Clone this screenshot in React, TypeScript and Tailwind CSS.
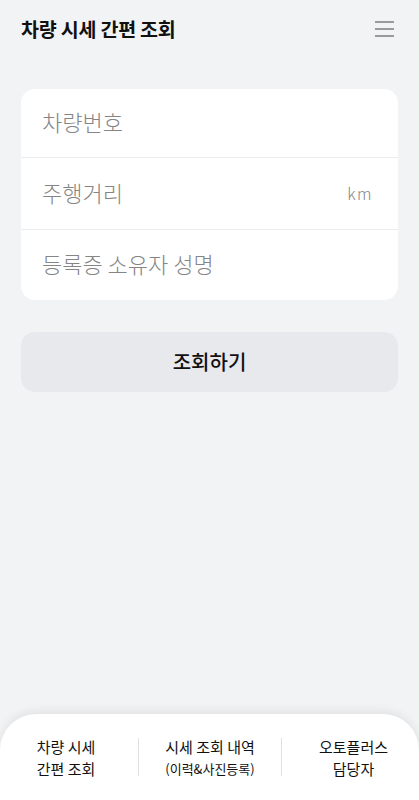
import React from "react";

const font = { fontFamily: '"Noto Sans CJK KR", "Noto Sans", sans-serif' };

export default function App() {
  return (
    <div className="w-[419px] h-[800px] bg-[#f2f3f5] flex flex-col overflow-hidden" style={font}>
      <header className="h-[58px] flex items-center justify-between pl-[21px] pr-[25px]">
        <h1 className="text-[19.5px] font-semibold text-[#111] tracking-[-0.2px]">차량 시세 간편 조회</h1>
        <div className="flex flex-col gap-[5.5px] w-[19px]">
          <span className="h-[1.5px] bg-[#9a9a9a]" />
          <span className="h-[1.5px] bg-[#9a9a9a]" />
          <span className="h-[1.5px] bg-[#9a9a9a]" />
        </div>
      </header>

      <main className="flex-1 px-[21px] pt-[31px]">
        <div className="bg-white rounded-[14px] flex flex-col">
          <div className="h-[69px] flex items-center px-[21px] pb-[3px] border-b border-[#ececee]">
            <span className="text-[22px] font-light text-[#858585]">차량번호</span>
          </div>
          <div className="h-[72px] flex items-center justify-between px-[21px] pr-[25px] pb-[2px] border-b border-[#ececee]">
            <span className="text-[22px] font-light text-[#858585]">주행거리</span>
            <span className="text-[16px] font-light text-[#858585] tracking-[1.5px]">km</span>
          </div>
          <div className="h-[70px] flex items-center px-[21px] pb-[3px]">
            <span className="text-[22px] font-light text-[#858585]">등록증 소유자 성명</span>
          </div>
        </div>

        <button className="mt-[32px] w-full h-[60px] rounded-[14px] bg-[#e8e9ed] flex items-center justify-center">
          <span className="text-[20px] font-medium text-[#111]">조회하기</span>
        </button>
      </main>

      <nav className="h-[86px] bg-white rounded-t-[36px] shadow-[0_-3px_10px_rgba(0,0,0,0.07)] flex items-start pt-[22px]">
        <div className="w-[138px] flex flex-col items-center text-[15px] leading-[22px] text-[#111] pr-[6px]">
          <span>차량 시세</span>
          <span>간편 조회</span>
        </div>
        <div className="w-[1px] h-[38px] mt-[2px] bg-[#e0e0e0]" />
        <div className="w-[142px] flex flex-col items-center text-[#111]">
          <span className="text-[15px] leading-[22px]">시세 조회 내역</span>
          <span className="text-[13px] leading-[22px]">(이력&amp;사진등록)</span>
        </div>
        <div className="w-[1px] h-[38px] mt-[2px] bg-[#e0e0e0]" />
        <div className="flex-1 flex flex-col items-center text-[15px] leading-[22px] text-[#111] pl-[6px]">
          <span>오토플러스</span>
          <span>담당자</span>
        </div>
      </nav>
    </div>
  );
}
